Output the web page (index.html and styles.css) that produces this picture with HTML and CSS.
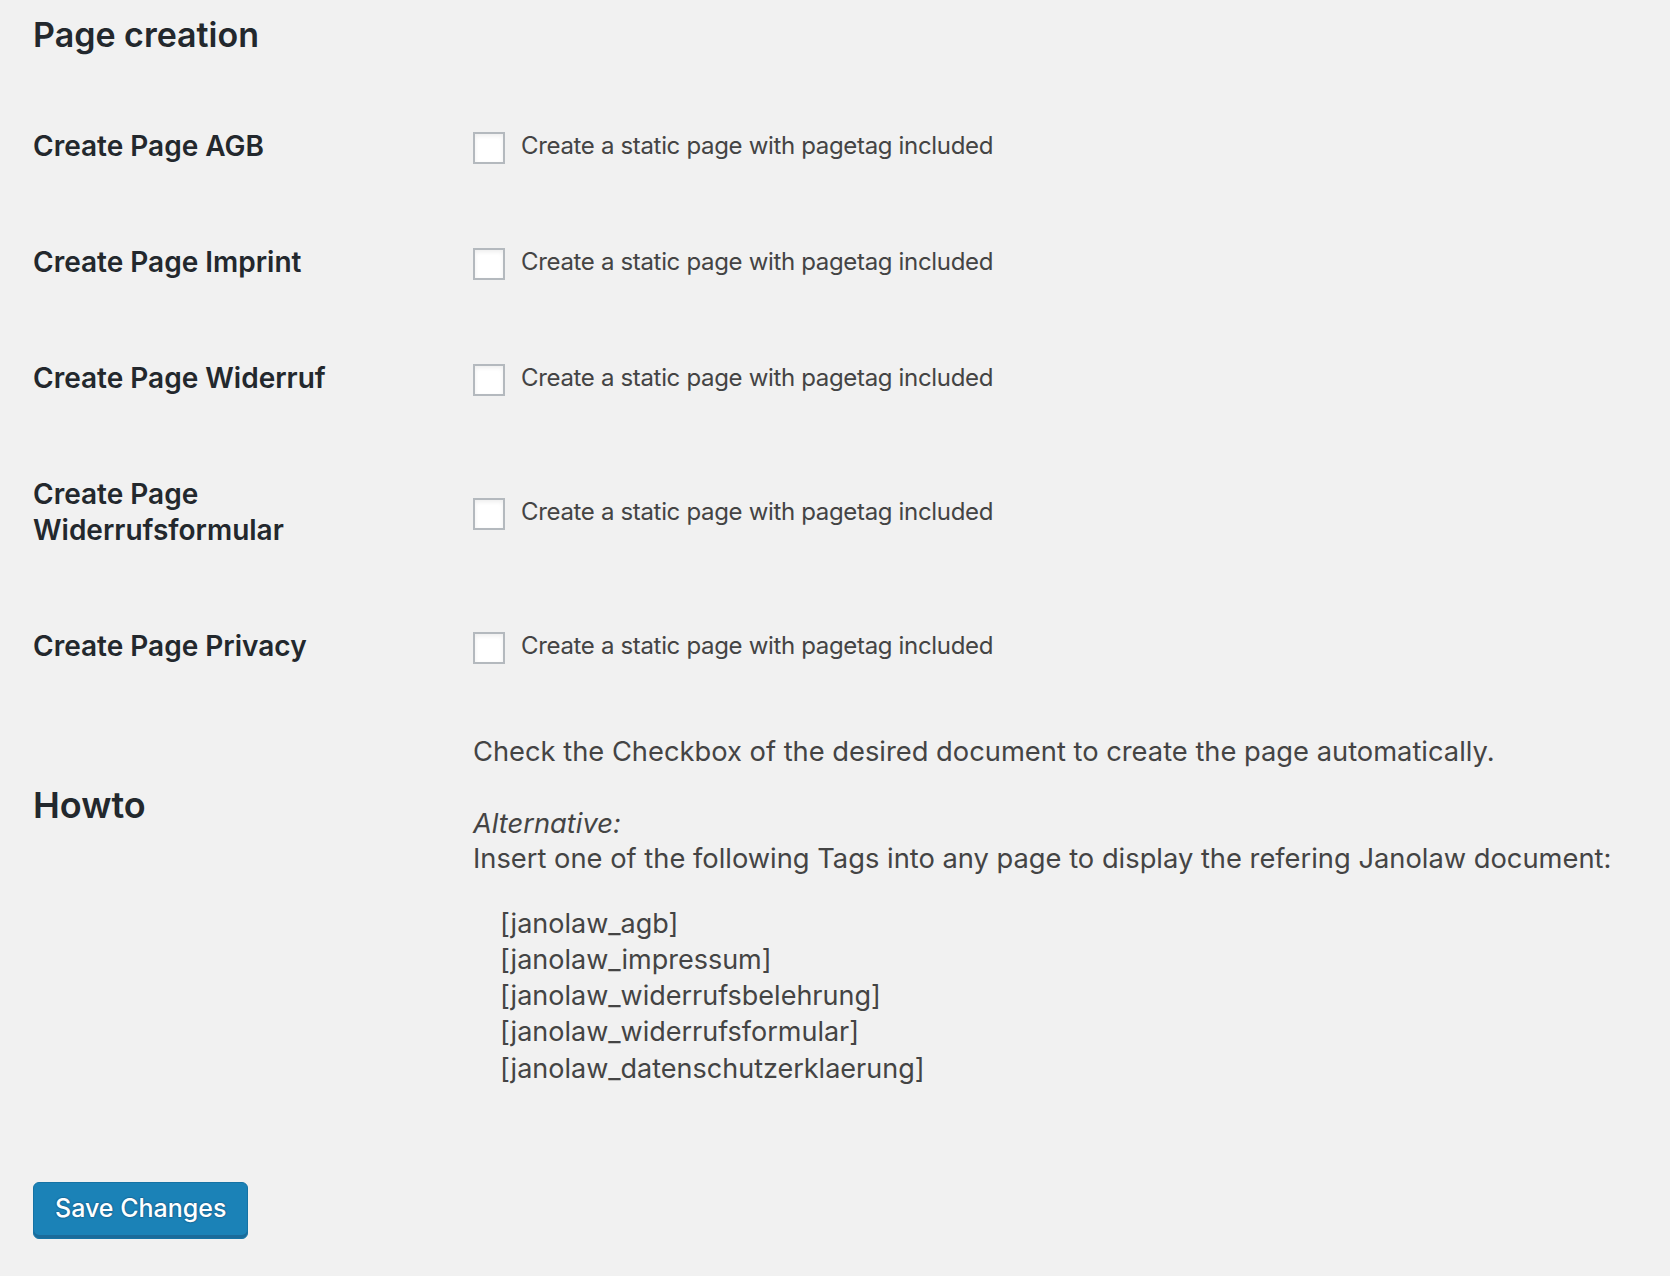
FILE: index.html
```html
<!DOCTYPE html>
<html lang="en">
<head>
<meta charset="utf-8">
<title>Page creation</title>
<link rel="stylesheet" href="styles.css">
</head>
<body>
<div class="wrap">
  <h2 class="section-title">Page creation</h2>
  <table class="form-table">
    <tbody>
      <tr>
        <th>Create Page AGB</th>
        <td><label class="check"><input type="checkbox" class="cb"><span>Create a static page with pagetag included</span></label></td>
      </tr>
      <tr>
        <th>Create Page Imprint</th>
        <td><label class="check"><input type="checkbox" class="cb"><span>Create a static page with pagetag included</span></label></td>
      </tr>
      <tr>
        <th>Create Page Widerruf</th>
        <td><label class="check"><input type="checkbox" class="cb"><span>Create a static page with pagetag included</span></label></td>
      </tr>
      <tr>
        <th>Create Page<br>Widerrufsformular</th>
        <td><label class="check"><input type="checkbox" class="cb"><span>Create a static page with pagetag included</span></label></td>
      </tr>
      <tr>
        <th>Create Page Privacy</th>
        <td><label class="check"><input type="checkbox" class="cb"><span>Create a static page with pagetag included</span></label></td>
      </tr>
      <tr class="howto">
        <th><h2 class="howto-title">Howto</h2></th>
        <td>
          <p class="howto-text">Check the Checkbox of the desired document to create the page automatically.<br><br><em>Alternative:</em><br>Insert one of the following Tags into any page to display the refering Janolaw document:</p>
          <ul class="tags">
            <li>[janolaw_agb]</li>
            <li>[janolaw_impressum]</li>
            <li>[janolaw_widerrufsbelehrung]</li>
            <li>[janolaw_widerrufsformular]</li>
            <li>[janolaw_datenschutzerklaerung]</li>
          </ul>
        </td>
      </tr>
    </tbody>
  </table>
  <p class="submit"><button type="button" class="button-primary">Save Changes</button></p>
</div>
</body>
</html>
```

FILE: styles.css
```css
html, body {
  margin: 0;
  padding: 0;
  background: #f1f1f1;
}

body {
  font-family: Inter, "Noto Sans", "Liberation Sans", sans-serif;
  color: #444;
}

.wrap {
  padding: 13px 33px 0 33px;
}

.section-title {
  margin: 0;
  font-size: 34px;
  line-height: 44px;
  font-weight: 600;
  color: #23282d;
}

.form-table {
  border-collapse: collapse;
  border-spacing: 0;
  margin-top: 31px;
  width: 100%;
}

.form-table th {
  width: 400px;
  padding: 40px 20px 40px 0;
  text-align: left;
  vertical-align: top;
  font-size: 28px;
  line-height: 36px;
  font-weight: 600;
  color: #23282d;
}

.form-table td {
  padding: 30px 20px;
  vertical-align: middle;
}

.check {
  display: flex;
  align-items: center;
  gap: 16px;
  font-size: 24px;
  letter-spacing: -0.33px;
  line-height: 36px;
  color: #444;
}

.cb {
  appearance: none;
  -webkit-appearance: none;
  box-sizing: border-box;
  width: 32px;
  height: 32px;
  margin: 3px 0 0 0;
  background: #fff;
  border: 2px solid #b4b9be;
  box-shadow: inset 0 2px 4px rgba(0, 0, 0, 0.07);
  flex: none;
}

.howto-title {
  margin: 38px 0 34px 0;
  font-size: 36px;
  line-height: 47px;
  font-weight: 600;
  color: #23282d;
}

.howto-text {
  margin: 0;
  font-size: 27.3px;
  line-height: 35.8px;
  color: #444;
}

.howto-text em {
  font-style: italic;
}

.tags {
  list-style: none;
  margin: 28.7px 0 0 0;
  padding: 0 0 0 27px;
  font-size: 27px;
  line-height: 36.2px;
  color: #444;
}

.submit {
  margin: 65px 0 0 0;
  padding: 0;
}

.button-primary {
  box-sizing: border-box;
  height: 57px;
  padding: 0 21px 3px 21px;
  margin: 0;
  background: #1b82b7;
  border: 1px solid #1573a5;
  border-radius: 6px;
  box-shadow: inset 0 -3px 0 #1b6b9a;
  color: #fff;
  font-family: Inter, "Noto Sans", "Liberation Sans", sans-serif;
  font-size: 25px;
  font-weight: 500;
  line-height: 1;
  text-shadow: 0 -1px 1px #1b6b9a, 1px 0 1px #1b6b9a, 0 1px 1px #1b6b9a, -1px 0 1px #1b6b9a;
  cursor: pointer;
}
```
